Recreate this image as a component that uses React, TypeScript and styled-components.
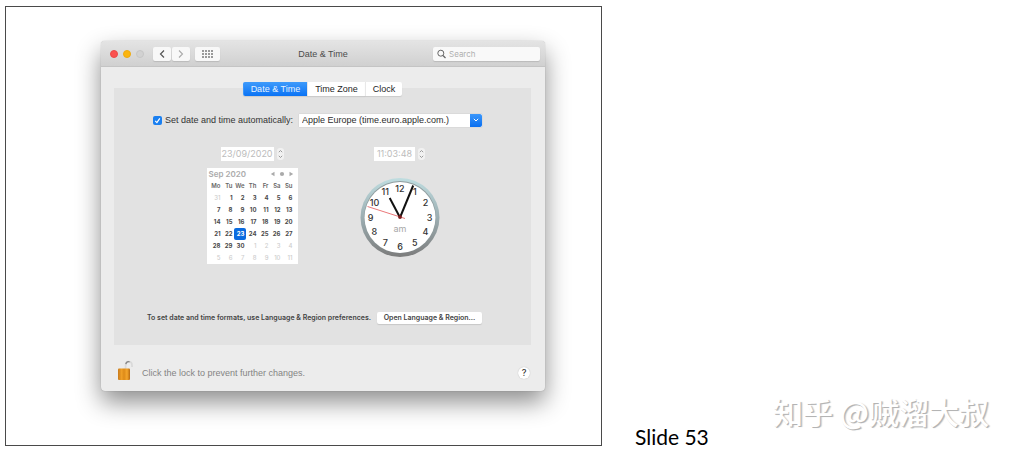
import React from "react";
import styled, { createGlobalStyle, css } from "styled-components";

const GlobalStyle = createGlobalStyle`
  * { box-sizing: border-box; }
  body { margin: 0; background: #fff; font-family: "Liberation Sans", Arial, sans-serif; }
  button, input, select { font: inherit; margin: 0; }
`;

const Page = styled.main`
  display: grid;
  grid-template-columns: minmax(0, 597fr) minmax(0, 414fr);
  padding: 6px 0 8px 5px;
`;

const SlideFrame = styled.section`
  padding: 34px 56px 54px 95px;
  border: 1px solid #4a4a4a;
`;

const Window = styled.div`
  border-radius: 4px;
  background: #ececec;
  box-shadow: 0 0 1px rgba(0, 0, 0, 0.35), 0 11px 24px rgba(0, 0, 0, 0.45);
`;

const TitleBar = styled.header`
  display: grid;
  grid-template-columns: 1fr auto 1fr;
  align-items: center;
  height: 26px;
  padding: 0 5px;
  border-bottom: 1px solid #c4c4c4;
  border-radius: 4px 4px 0 0;
  background: linear-gradient(#e4e4e4, #d0d0d0);
`;

const TitleTools = styled.div`
  display: flex;
  align-items: center;
`;

const Lights = styled.div`
  display: flex;
  gap: 5px;
  margin: 0 8px 0 4px;
`;

const Light = styled.button<{ $color: string; $edge: string }>`
  width: 8px;
  height: 8px;
  padding: 0;
  border: 1px solid ${(p) => p.$edge};
  border-radius: 50%;
  background: ${(p) => p.$color};
`;

const ToolButton = styled.button<{ $wide?: boolean }>`
  display: flex;
  align-items: center;
  justify-content: center;
  width: ${(p) => (p.$wide ? 25 : 18)}px;
  height: 14px;
  margin-left: ${(p) => (p.$wide ? 5 : 1)}px;
  padding: 0;
  border: 0;
  border-radius: 2px;
  background: #f8f8f8;
  box-shadow: 0 1px 1px rgba(0, 0, 0, 0.12);
`;

const Title = styled.h1`
  margin: 0;
  color: #4c4c4c;
  font-size: 9px;
  font-weight: 400;
  line-height: 12px;
`;

const SearchField = styled.label`
  display: flex;
  align-items: center;
  justify-self: end;
  gap: 3px;
  width: 107px;
  height: 14px;
  padding: 0 4px;
  border-radius: 2px;
  background: #f9f9f9;
  box-shadow: 0 1px 1px rgba(0, 0, 0, 0.12);
`;

const SearchInput = styled.input`
  flex: 1;
  min-width: 0;
  padding: 0;
  border: 0;
  background: none;
  font-family: Inter, sans-serif;
  font-size: 8px;
  line-height: 12px;
  &::placeholder { color: #b0b0b0; opacity: 1; }
`;

const Body = styled.div`
  padding: 15px 14px 0 13px;
`;

const Tabs = styled.div`
  position: relative;
  display: flex;
  justify-content: center;
`;

const Tab = styled.button<{ $active?: boolean }>`
  height: 14px;
  padding: 0 7px;
  border: 0;
  border-left: 1px solid #e8e8e8;
  background: #fff;
  color: #262626;
  font-size: 9px;
  line-height: 14px;
  box-shadow: 0 1px 1px rgba(0, 0, 0, 0.1);
  &:first-child { border-radius: 2px 0 0 2px; }
  &:last-child { border-radius: 0 2px 2px 0; }
  ${(p) =>
    p.$active &&
    css`
      border-left-color: #3b96fb;
      background: linear-gradient(#3f9bfb, #0a73f5);
      color: #e6f2ff;
    `}
`;

const Panel = styled.section`
  margin-top: -8px;
  padding: 25px 49px 21px 24px;
  background: #e2e2e2;
`;

const SettingRow = styled.div`
  display: flex;
  align-items: center;
  justify-content: flex-end;
  gap: 6px;
  height: 14px;
`;

const CheckLabel = styled.label`
  display: flex;
  align-items: center;
  gap: 3px;
  color: #333;
  font-size: 9px;
  line-height: 12px;
  white-space: nowrap;
`;

const CheckBox = styled.span`
  display: grid;
  width: 9px;
  height: 9px;
  > * { grid-area: 1 / 1; }
  svg { pointer-events: none; }
`;

const CheckInput = styled.input`
  appearance: none;
  width: 9px;
  height: 9px;
  border-radius: 2px;
  background: #d0d0d0;
  &:checked { background: #1a7ff0; }
`;

const ServerBox = styled.span`
  display: grid;
  grid-template-columns: 1fr 12px;
  width: 183px;
  height: 13px;
  background: #fff;
  box-shadow: 0 0 1px rgba(0, 0, 0, 0.2);
`;

const ServerSelect = styled.select`
  grid-area: 1 / 1 / 2 / 3;
  appearance: none;
  min-width: 0;
  padding: 0 12px 0 3px;
  border: 0;
  background: none;
  color: #2c2c2c;
  font-size: 9px;
  line-height: 12px;
`;

const ServerArrow = styled.span`
  grid-area: 1 / 2;
  display: flex;
  align-items: center;
  justify-content: center;
  border-radius: 0 2px 2px 0;
  background: linear-gradient(#3b97fb, #0a6ff0);
  pointer-events: none;
`;

const Pickers = styled.div`
  display: flex;
  justify-content: center;
  gap: 62px;
  margin: 20px 0 48px 26px;
  font-family: Inter, sans-serif;
`;

const Picker = styled.div<{ $gap: number }>`
  display: flex;
  flex-direction: column;
  align-items: center;
  gap: ${(p) => p.$gap}px;
`;

const StepField = styled.div`
  display: flex;
  align-items: center;
  gap: 3px;
`;

const StepInput = styled.input<{ $width: number }>`
  width: ${(p) => p.$width}px;
  height: 14px;
  padding: 0;
  border: 0;
  background: #fff;
  color: #bcbcbc;
  font-size: 9px;
  line-height: 14px;
  text-align: center;
`;

const Stepper = styled.button`
  display: flex;
  width: 7px;
  height: 12px;
  padding: 0;
  border: 0;
  border-radius: 3px;
  background: #f1f1f1;
`;

const Calendar = styled.div`
  width: 91px;
  padding: 0 4px 0 3px;
  background: #fff;
`;

const CalendarHead = styled.div`
  display: flex;
  align-items: center;
  justify-content: space-between;
  height: 12px;
  margin-left: -1px;
  color: #ababab;
  font-size: 8px;
  font-weight: 600;
  line-height: 12px;
`;

const CalendarTable = styled.table`
  width: 100%;
  border-collapse: collapse;
  table-layout: fixed;
`;

const DayName = styled.th`
  height: 12px;
  padding: 0 1px 0 0;
  color: #666;
  font-size: 6px;
  font-weight: 600;
  line-height: 12px;
  text-align: right;
`;

const Day = styled.td<{ $muted?: boolean; $today?: boolean }>`
  height: 12px;
  padding: 0 1px 0 0;
  color: ${(p) => (p.$muted ? "#cdcdcd" : "#4a4a4a")};
  font-size: 6px;
  font-weight: ${(p) => (p.$muted ? 500 : 700)};
  line-height: 12px;
  text-align: right;
  ${(p) =>
    p.$today &&
    css`
      border-radius: 2px;
      background: #0a6be0;
      color: #fff;
    `}
`;

const FormatRow = styled.div`
  display: flex;
  align-items: center;
  justify-content: flex-end;
  gap: 6px;
  font-family: Inter, sans-serif;
`;

const FormatText = styled.p`
  margin: 0;
  color: #444;
  font-size: 7px;
  font-weight: 600;
  line-height: 12px;
  white-space: nowrap;
`;

const OpenButton = styled.button`
  flex-shrink: 0;
  width: 105px;
  height: 12px;
  padding: 0;
  border: 0;
  border-radius: 2px;
  background: #fff;
  color: #444;
  font-size: 7px;
  font-weight: 600;
  line-height: 12px;
  white-space: nowrap;
  box-shadow: 0 1px 1px rgba(0, 0, 0, 0.12);
`;

const Footer = styled.footer`
  display: flex;
  align-items: center;
  gap: 8px;
  height: 46px;
  padding: 9px 1px 0 3px;
`;

const LockButton = styled.button`
  width: 17px;
  height: 22px;
  margin-bottom: 5px;
  padding: 0;
  border: 0;
  background: none;
`;

const LockText = styled.p`
  flex: 1;
  margin: 0;
  color: #848484;
  font-size: 9px;
  line-height: 12px;
`;

const HelpButton = styled.button`
  width: 12px;
  height: 12px;
  padding: 0;
  border: 0;
  border-radius: 50%;
  background: #fff;
  color: #333;
  font-family: Inter, sans-serif;
  font-size: 9px;
  font-weight: 500;
  line-height: 12px;
  box-shadow: 0 0 1px rgba(0, 0, 0, 0.3);
`;

const Side = styled.aside`
  display: flex;
  flex-direction: column;
  justify-content: flex-end;
  padding-left: 33px;
`;

const Watermark = styled.p`
  align-self: flex-end;
  margin: 0 27px 0 0;
  color: #fff;
  font-family: "Noto Sans CJK SC", sans-serif;
  font-size: 30px;
  font-weight: 500;
  line-height: 28px;
  text-shadow: 1px 1px 0 #b4b4b4, 2px 1px 1px #d0d0d0;
  white-space: nowrap;
`;

const Caption = styled.p`
  margin: 0 0 -3px;
  color: #000;
  font-family: Lato, sans-serif;
  font-size: 21px;
  line-height: 24px;
`;

const dayNames = ["Mo", "Tu", "We", "Th", "Fr", "Sa", "Su"];

const weeks = [
  [31, 1, 2, 3, 4, 5, 6],
  [7, 8, 9, 10, 11, 12, 13],
  [14, 15, 16, 17, 18, 19, 20],
  [21, 22, 23, 24, 25, 26, 27],
  [28, 29, 30, 1, 2, 3, 4],
  [5, 6, 7, 8, 9, 10, 11],
];

const isOutside = (week: number, day: number) =>
  (week === 0 && day > 20) || (week > 3 && day < 20);

function StepArrows({ label }: { label: string }) {
  return (
    <Stepper aria-label={label}>
      <svg width="7" height="12" viewBox="0 0 7 12" fill="none" stroke="#9a9a9a">
        <path d="M1.8 4.2 3.5 2.5 5.2 4.2M1.8 7.8 3.5 9.5 5.2 7.8" />
      </svg>
    </Stepper>
  );
}

function ClockFace() {
  const hours = Array.from({ length: 12 }, (_, i) => i + 1);
  return (
    <svg width="80" height="80" viewBox="0 0 80 80" role="img" aria-label="Clock">
      <defs>
        <linearGradient id="rim" x1="0" y1="0" x2="0" y2="1">
          <stop offset="0" stopColor="#bfdde0" />
          <stop offset="0.5" stopColor="#9caeb2" />
          <stop offset="1" stopColor="#7c7c7c" />
        </linearGradient>
      </defs>
      <circle cx="40" cy="39.5" r="39.5" fill="url(#rim)" />
      <circle cx="40" cy="39" r="36" fill="#8f9c9e" />
      <circle cx="40" cy="39.5" r="35.5" fill="#fff" />
      <g fill="#333" fontSize="9" fontWeight="500" textAnchor="middle">
        {hours.map((h) => {
          const a = (h * Math.PI) / 6;
          return (
            <text key={h} x={40 + 29.5 * Math.sin(a)} y={42.5 - 29 * Math.cos(a)}>
              {h}
            </text>
          );
        })}
      </g>
      <text x="40" y="54" fill="#a8a8a8" fontSize="9" textAnchor="middle">
        am
      </text>
      <g stroke="#111" strokeLinecap="butt">
        <path d="M40 39.5 29.7 20" strokeWidth="2" />
        <path d="M40 39.5 53.2 7.5" strokeWidth="2" />
      </g>
      <path d="M7.5 28.5 45 40.5" stroke="#e8696b" strokeWidth="0.9" />
      <circle cx="40" cy="39" r="1.9" fill="#7a1c1c" />
    </svg>
  );
}

export default function App() {
  return (
    <>
      <GlobalStyle />
      <Page>
        <SlideFrame>
          <Window>
            <TitleBar>
              <TitleTools>
                <Lights>
                  <Light $color="#fb5250" $edge="#ec4a48" aria-label="Close" />
                  <Light $color="#fbb50f" $edge="#eeaa10" aria-label="Minimise" />
                  <Light $color="#d2d2d2" $edge="#c6c6c6" aria-label="Zoom" disabled />
                </Lights>
                <ToolButton aria-label="Back">
                  <svg width="8" height="10" viewBox="0 0 8 10" fill="none" stroke="#555" strokeWidth="1.2">
                    <path d="M6 1.5 2.5 5 6 8.5" />
                  </svg>
                </ToolButton>
                <ToolButton aria-label="Forward">
                  <svg width="8" height="10" viewBox="0 0 8 10" fill="none" stroke="#aaa" strokeWidth="1.1">
                    <path d="M2 1.5 5.5 5 2 8.5" />
                  </svg>
                </ToolButton>
                <ToolButton $wide aria-label="Show all">
                  <svg width="11" height="8" viewBox="0 0 11 8" fill="#999">
                    {[0, 3, 6].map((y) =>
                      [0, 3, 6, 9].map((x) => <rect key={`${x}-${y}`} x={x} y={y} width="2" height="2" />)
                    )}
                  </svg>
                </ToolButton>
              </TitleTools>
              <Title>Date &amp; Time</Title>
              <SearchField>
                <svg width="9" height="10" viewBox="0 0 9 10" fill="none" stroke="#666">
                  <circle cx="3.8" cy="4.2" r="3" />
                  <path d="M6 6.5 8.5 9" strokeWidth="1.2" />
                </svg>
                <SearchInput placeholder="Search" aria-label="Search" />
              </SearchField>
            </TitleBar>
            <Body>
              <Tabs role="tablist">
                <Tab role="tab" aria-selected $active>Date &amp; Time</Tab>
                <Tab role="tab">Time Zone</Tab>
                <Tab role="tab">Clock</Tab>
              </Tabs>
              <Panel>
                <SettingRow>
                  <CheckLabel>
                    <CheckBox>
                      <CheckInput type="checkbox" defaultChecked />
                      <svg width="9" height="9" viewBox="0 0 9 9" fill="none" stroke="#fff" strokeWidth="1.2">
                        <path d="M2.2 4.8 3.9 6.6 6.8 2.3" />
                      </svg>
                    </CheckBox>
                    Set date and time automatically:
                  </CheckLabel>
                  <ServerBox>
                    <ServerSelect aria-label="Time server">
                      <option>Apple Europe (time.euro.apple.com.)</option>
                    </ServerSelect>
                    <ServerArrow>
                      <svg width="6" height="4" viewBox="0 0 6 4" fill="none" stroke="#fff">
                        <path d="M0.8 0.8 3 3 5.2 0.8" />
                      </svg>
                    </ServerArrow>
                  </ServerBox>
                </SettingRow>
                <Pickers>
                  <Picker $gap={7}>
                    <StepField>
                      <StepInput $width={53} aria-label="Date" defaultValue="23/09/2020" disabled />
                      <StepArrows label="Change date" />
                    </StepField>
                    <Calendar>
                      <CalendarHead>
                        Sep 2020
                        <svg width="24" height="6" viewBox="0 0 24 6" fill="#aaa">
                          <path d="M4.5 0.8v4.4L0.8 3zM19.5 0.8v4.4L23.2 3z" />
                          <circle cx="12" cy="3" r="2.1" />
                        </svg>
                      </CalendarHead>
                      <CalendarTable>
                        <thead>
                          <tr>
                            {dayNames.map((name) => (
                              <DayName key={name} scope="col">{name}</DayName>
                            ))}
                          </tr>
                        </thead>
                        <tbody>
                          {weeks.map((week, w) => (
                            <tr key={w}>
                              {week.map((day) => (
                                <Day key={day} $muted={isOutside(w, day)} $today={w === 3 && day === 23}>
                                  {day}
                                </Day>
                              ))}
                            </tr>
                          ))}
                        </tbody>
                      </CalendarTable>
                    </Calendar>
                  </Picker>
                  <Picker $gap={17}>
                    <StepField>
                      <StepInput $width={41} aria-label="Time" defaultValue="11:03:48" disabled />
                      <StepArrows label="Change time" />
                    </StepField>
                    <ClockFace />
                  </Picker>
                </Pickers>
                <FormatRow>
                  <FormatText>To set date and time formats, use Language &amp; Region preferences.</FormatText>
                  <OpenButton>Open Language &amp; Region...</OpenButton>
                </FormatRow>
              </Panel>
              <Footer>
                <LockButton aria-label="Lock">
                  <svg width="17" height="22" viewBox="0 0 17 22">
                    <defs>
                      <linearGradient id="brass">
                        <stop offset="0" stopColor="#c87a1c" />
                        <stop offset="0.3" stopColor="#f0a027" />
                        <stop offset="0.5" stopColor="#dd8a18" />
                        <stop offset="0.75" stopColor="#f5a62c" />
                        <stop offset="1" stopColor="#b86a10" />
                      </linearGradient>
                    </defs>
                    <path d="M8.6 10V6.5C8.6 1.2 15 1.2 15 6.5V8" fill="none" stroke="#dadada" strokeWidth="1.8" />
                    <path d="M8.8 5.2C9.4 2.8 11 2.3 12.6 2.8" fill="none" stroke="#888" strokeWidth="1.4" />
                    <rect x="1" y="9.5" width="12" height="11.5" rx="1" fill="url(#brass)" />
                  </svg>
                </LockButton>
                <LockText>Click the lock to prevent further changes.</LockText>
                <HelpButton aria-label="Help">?</HelpButton>
              </Footer>
            </Body>
          </Window>
        </SlideFrame>
        <Side>
          <Watermark>知乎 @贼溜大叔</Watermark>
          <Caption>Slide 53</Caption>
        </Side>
      </Page>
    </>
  );
}
